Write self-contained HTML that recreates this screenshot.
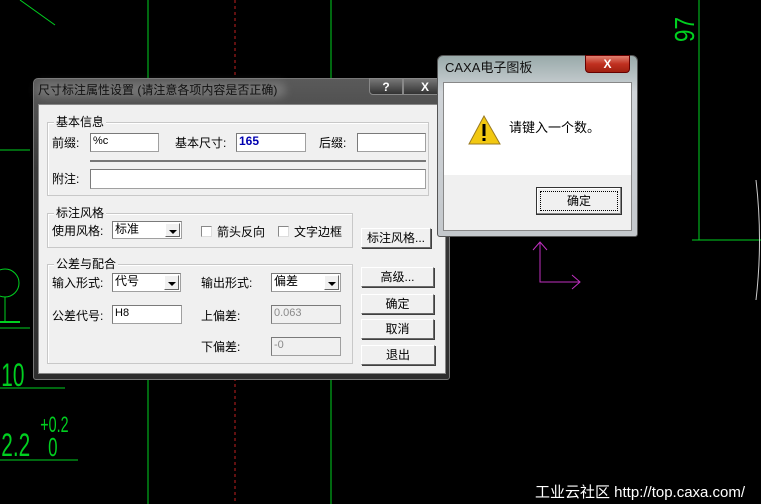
<!DOCTYPE html>
<html><head><meta charset="utf-8"><style>
*{margin:0;padding:0;box-sizing:border-box}
body{width:761px;height:504px;background:#000;position:relative;overflow:hidden;font-family:"Liberation Sans","Noto Sans CJK SC",sans-serif;font-size:12px;color:#000}
.a{position:absolute}
.lbl{position:absolute;font-size:12px;line-height:14px;white-space:nowrap}
.inp{position:absolute;background:#fff;border:1px solid #a0a0a0;border-top-color:#7a7a7a;border-left-color:#7a7a7a;font-size:11px;line-height:14px;padding-left:2px}
.dis{background:#f0f0f0;color:#8a8a8a}
.grp{position:absolute;border:1px solid #c8c8c8;box-shadow:inset 1px 1px 0 #fff}
.gt{position:absolute;top:-8px;left:6px;background:#f0f0f0;padding:0 2px;font-size:12px;line-height:14px}
.btn{position:absolute;background:#f0f0f0;border:1px solid;border-color:#fff #6a6a6a #6a6a6a #fff;box-shadow:1px 1px 0 #404040;text-align:center;font-size:12px;line-height:18px}
.cb{position:absolute;background:#fff;border:1px solid #888;border-right-color:#ddd;border-bottom-color:#ddd;width:11px;height:11px}
.dd{position:absolute;right:1px;top:1px;bottom:1px;width:15px;background:#f0f0f0;border:1px solid;border-color:#fff #666 #666 #fff}
.dd:after{content:"";position:absolute;left:3px;top:6px;border-left:4px solid transparent;border-right:4px solid transparent;border-top:4px solid #000}
</style></head><body>
<svg class="a" style="left:0;top:0" width="761" height="504">
<g stroke="#00d020" stroke-width="1" fill="none">
<line x1="148" y1="0" x2="148" y2="504"/>
<line x1="331" y1="0" x2="331" y2="504"/>
<line x1="699" y1="0" x2="699" y2="240"/>
<line x1="692" y1="240" x2="761" y2="240"/>
<line x1="20" y1="0" x2="55" y2="25"/>
<line x1="0" y1="150" x2="30" y2="150"/>
<line x1="0" y1="328" x2="30" y2="328"/>
<line x1="0" y1="388" x2="65" y2="388"/>
<line x1="0" y1="460" x2="78" y2="460"/>
<circle cx="5" cy="283" r="14"/>
<line x1="5" y1="297" x2="5" y2="322"/>
<line x1="0" y1="322" x2="20" y2="322" stroke-width="2"/>
<path d="M756 180 Q763 240 756 300" stroke="#ccc"/>
</g>
<line x1="235" y1="0" x2="235" y2="504" stroke="#c02020" stroke-dasharray="3,3"/>
<g stroke="#c030c0" fill="none"><polyline points="540,242 540,282 580,282"/><polyline points="533,250 540,242 547,250"/><polyline points="572,275 580,282 572,289"/></g>
<g fill="#00d020" font-family="Liberation Sans" font-size="32">
<text x="2" y="386" transform="scale(0.65,1)">10</text>
<text x="2" y="456" transform="scale(0.65,1)">2.2</text>
<text x="62" y="432" font-size="22" transform="scale(0.65,1)">+0.2</text>
<text x="74" y="456" font-size="26" transform="scale(0.65,1)">0</text>
<text transform="translate(694,42) rotate(-90) scale(0.8,1)" font-size="28">97</text>
</g>
<text x="535" y="497" fill="#fff" font-size="15" font-family="Liberation Sans,Noto Sans CJK SC,sans-serif">工业云社区 http://top.caxa.com/</text>
</svg>

<!-- main dialog -->
<div class="a" style="left:33px;top:78px;width:417px;height:302px;background:linear-gradient(#5a5a5a,#3a3a3a 30%,#2e2e2e);border:1px solid #777;border-radius:5px 5px 3px 3px"></div>
<div class="a" style="left:36px;top:82px;width:250px;height:16px;background:rgba(170,170,170,0.35);filter:blur(4px);border-radius:8px"></div>
<div class="lbl" style="left:38px;top:83px;color:#111">尺寸标注属性设置 (请注意各项内容是否正确)</div>
<div class="a" style="left:369px;top:78px;width:34px;height:17px;background:linear-gradient(#777,#333);border:1px solid #888;border-radius:0 0 0 4px;color:#fff;text-align:center;font-weight:bold;line-height:16px">?</div>
<div class="a" style="left:403px;top:78px;width:44px;height:17px;background:linear-gradient(#777,#333);border:1px solid #888;border-radius:0 0 4px 0;color:#fff;text-align:center;font-weight:bold;line-height:16px">X</div>
<div class="a" style="left:38px;top:104px;width:408px;height:270px;background:#f0f0f0;border:1px solid #888"></div>

<div class="grp" style="left:47px;top:122px;width:382px;height:74px"><div class="gt">基本信息</div></div>
<div class="lbl" style="left:52px;top:136px">前缀:</div>
<div class="inp" style="left:90px;top:133px;width:69px;height:19px">%c</div>
<div class="lbl" style="left:175px;top:136px">基本尺寸:</div>
<div class="inp" style="left:236px;top:133px;width:70px;height:19px;color:#0000b0;font-weight:bold;font-size:12px">165</div>
<div class="lbl" style="left:319px;top:136px">后缀:</div>
<div class="inp" style="left:357px;top:133px;width:69px;height:19px"></div>
<div class="a" style="left:90px;top:160px;width:336px;height:2px;background:#777"></div>
<div class="lbl" style="left:52px;top:172px">附注:</div>
<div class="inp" style="left:90px;top:169px;width:336px;height:20px"></div>

<div class="grp" style="left:47px;top:213px;width:306px;height:35px"><div class="gt">标注风格</div></div>
<div class="lbl" style="left:52px;top:224px">使用风格:</div>
<div class="inp" style="left:112px;top:221px;width:70px;height:18px;font-size:12px">标准<div class="dd"></div></div>
<div class="cb" style="left:201px;top:226px"></div><div class="lbl" style="left:217px;top:225px">箭头反向</div>
<div class="cb" style="left:278px;top:226px"></div><div class="lbl" style="left:294px;top:225px">文字边框</div>
<div class="btn" style="left:361px;top:228px;width:70px;height:20px">标注风格...</div>

<div class="grp" style="left:47px;top:264px;width:306px;height:100px"><div class="gt">公差与配合</div></div>
<div class="lbl" style="left:52px;top:276px">输入形式:</div>
<div class="inp" style="left:112px;top:273px;width:69px;height:19px;font-size:12px">代号<div class="dd"></div></div>
<div class="lbl" style="left:201px;top:276px">输出形式:</div>
<div class="inp" style="left:271px;top:273px;width:70px;height:19px;font-size:12px">偏差<div class="dd"></div></div>
<div class="lbl" style="left:52px;top:309px">公差代号:</div>
<div class="inp" style="left:112px;top:305px;width:70px;height:19px">H8</div>
<div class="lbl" style="left:201px;top:309px">上偏差:</div>
<div class="inp dis" style="left:271px;top:305px;width:70px;height:19px">0.063</div>
<div class="lbl" style="left:201px;top:340px">下偏差:</div>
<div class="inp dis" style="left:271px;top:337px;width:70px;height:19px">-0</div>

<div class="btn" style="left:361px;top:267px;width:73px;height:20px">高级...</div>
<div class="btn" style="left:361px;top:294px;width:73px;height:20px">确定</div>
<div class="btn" style="left:361px;top:319px;width:73px;height:20px">取消</div>
<div class="btn" style="left:361px;top:345px;width:74px;height:20px">退出</div>

<!-- message box -->
<div class="a" style="left:437px;top:55px;width:201px;height:182px;background:linear-gradient(#9aa,#d0d4d8 20%,#c4c8cc);border:1px solid #555;border-radius:6px 6px 3px 3px"></div>
<div class="lbl" style="left:445px;top:61px;font-size:13px;color:#111">CAXA电子图板</div>
<div class="a" style="left:585px;top:55px;width:45px;height:18px;background:linear-gradient(#e08070,#c03020 50%,#a02010);border:1px solid #600;border-radius:0 0 4px 4px;color:#fff;text-align:center;font-weight:bold;line-height:17px">X</div>
<div class="a" style="left:443px;top:82px;width:189px;height:149px;background:#f0f0f0;border:1px solid #888"></div>
<div class="a" style="left:444px;top:83px;width:187px;height:92px;background:#fff"></div>
<svg class="a" style="left:468px;top:115px" width="33" height="30"><polygon points="16,1 32,29 1,29" fill="#f2c811" stroke="#9a7a20"/><rect x="14.5" y="9" width="3" height="12" fill="#000"/><rect x="14.5" y="23" width="3" height="3" fill="#000"/></svg>
<div class="lbl" style="left:509px;top:121px;font-size:13px">请键入一个数。</div>
<div class="a" style="left:536px;top:187px;width:86px;height:28px;border:1px solid #333;background:#f0f0f0;box-shadow:inset -1px -1px 0 #888,inset 1px 1px 0 #fff"><div style="position:absolute;left:3px;top:3px;right:3px;bottom:3px;border:1px dotted #000;text-align:center;line-height:18px">确定</div></div>
</body></html>
